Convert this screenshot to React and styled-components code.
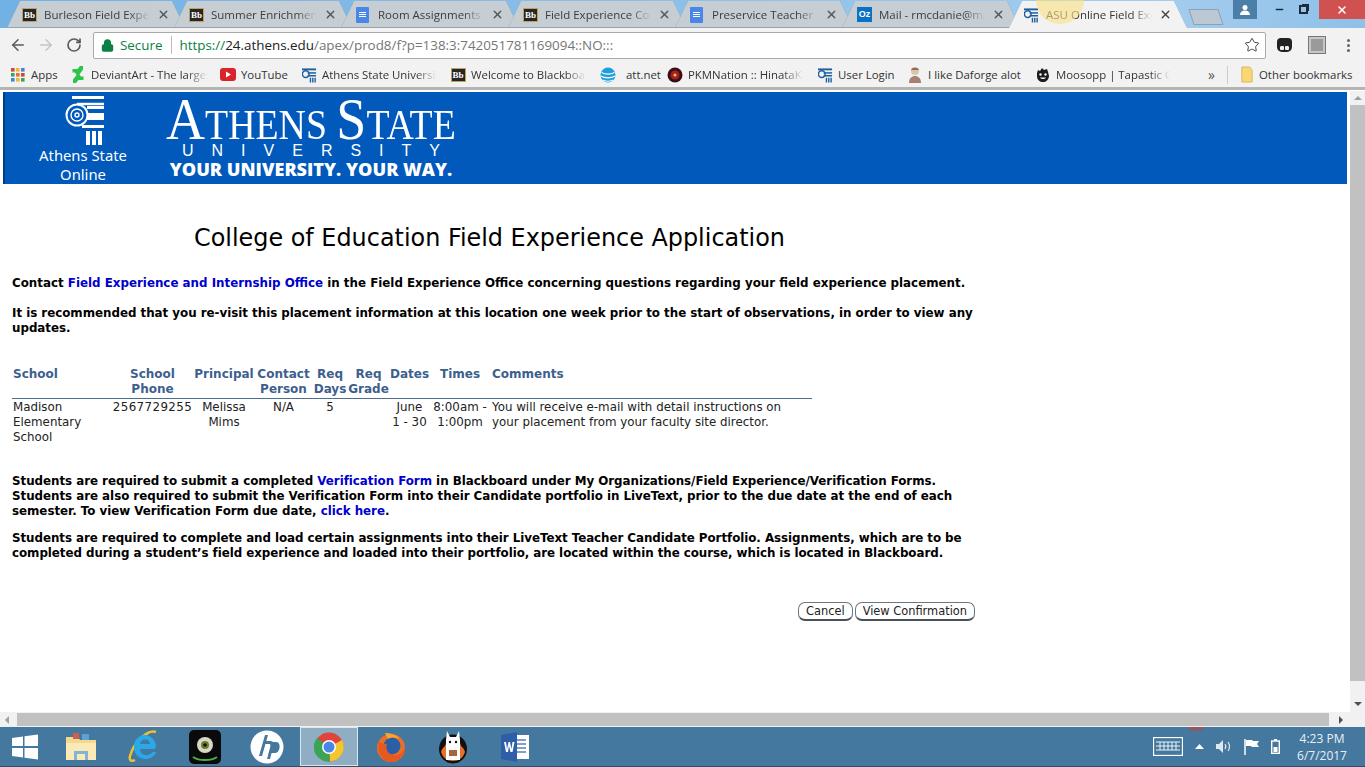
import styled, { createGlobalStyle } from "styled-components";
import { ArrowLeft, ArrowRight, RotateCw, Star, Lock, X, Minus } from "lucide-react";

const Global = createGlobalStyle`
  html, body { margin: 0; padding: 0; overflow: hidden; background: #fff; }
  * { box-sizing: border-box; }
`;

const Screen = styled.div`
  width: 1365px;
  height: 767px;
  display: flex;
  flex-direction: column;
  overflow: hidden;
  font-family: "Open Sans", "Noto Sans", sans-serif;
`;

/* ---------- tab strip ---------- */
const Strip = styled.div`
  height: 28px;
  flex: none;
  display: flex;
  position: relative;
  padding: 1px 0 0 7px;
  background: linear-gradient(90deg, #72b1e4 0%, #8dc0e8 50%, #a4cdee 85%, #8fc0e8 100%);
`;

const TabShell = styled.div`
  width: 178px;
  height: 27px;
  flex: none;
  margin-left: ${(p) => (p.$first ? 0 : -11)}px;
  position: relative;
  z-index: ${(p) => (p.$active ? 2 : 1)};
  filter: drop-shadow(0 0 0.6px #6f8190);
`;

const Tab = styled.div`
  height: 27px;
  display: flex;
  align-items: center;
  gap: 7px;
  padding: 0 15px;
  font-size: 11.500px;
  color: ${(p) => (p.$active ? "#333" : "#3c3c3c")};
  background: ${(p) => (p.$active ? "#f2f2f2" : "linear-gradient(#c6ced4 96%, #9aa5ae 96%)")};
  clip-path: polygon(0 100%, 13px 0, calc(100% - 13px) 0, 100% 100%);
`;

const TabTitle = styled.span`
  flex: 1;
  min-width: 0;
  white-space: nowrap;
  overflow: hidden;
  -webkit-mask-image: linear-gradient(90deg, #000 80%, transparent 100%);
  mask-image: linear-gradient(90deg, #000 80%, transparent 100%);
`;

const NewTab = styled.div`
  width: 30px;
  height: 16px;
  margin: 8px 0 0 4px;
  flex: none;
  background: #bcc8d3;
  border: 1px solid #8aa2b6;
  transform: skewX(18deg);
`;

const Glow = styled.div`
  position: absolute;
  z-index: 3;
  left: 1036px;
  top: -24px;
  width: 48px;
  height: 48px;
  border-radius: 50%;
  background: radial-gradient(circle, rgba(250, 225, 130, 0.6) 72%, rgba(250, 225, 130, 0) 100%);
`;

const WinButtons = styled.div`
  position: absolute;
  right: 0;
  top: 0;
  height: 19px;
  display: flex;
  align-items: flex-start;
`;

const UserBtn = styled.div`
  width: 24px;
  height: 19px;
  margin-right: 10px;
  background: #4c7fa8;
  display: flex;
  align-items: center;
  justify-content: center;
`;

const WinBtn = styled.div`
  width: ${(p) => p.$w}px;
  height: 19px;
  display: flex;
  align-items: center;
  justify-content: center;
  padding-right: ${(p) => (p.$pad ? p.$pad : 0)}px;
  background: ${(p) => (p.$close ? "#d05250" : "transparent")};
  color: ${(p) => (p.$close ? "#fff" : "#1c2c3a")};
`;

const Restore = styled.div`
  width: 9px;
  height: 9px;
  border: 2px solid #1c2c3a;
  box-shadow: 2px -2px 0 -1px #1c2c3a;
`;

/* ---------- toolbar ---------- */
const Toolbar = styled.div`
  height: 34px;
  flex: none;
  display: flex;
  align-items: center;
  background: #f2f2f2;
  padding: 0 0 0 4px;
  color: #555;
`;

const NavBtn = styled.div`
  width: 28px;
  display: flex;
  justify-content: center;
  color: ${(p) => (p.$off ? "#c4c4c4" : "#5a5a5a")};
`;

const Omnibox = styled.div`
  width: 1173px;
  height: 27px;
  margin-left: 5px;
  display: flex;
  align-items: center;
  background: #fff;
  border: 1px solid #a9a9a9;
  border-radius: 2px;
  padding: 0 5px 0 7px;
  font-size: 13.400px;
`;

const Secure = styled.span`
  display: flex;
  align-items: center;
  gap: 6px;
  color: #0b8043;
  padding-right: 9px;
  margin-right: 7px;
  border-right: 1px solid #bbb;
  height: 18px;
`;

const Url = styled.span`
  flex: 1;
  color: #767676;
  white-space: nowrap;
  i { font-style: normal; color: #0b8043; }
  b { font-weight: 400; color: #222; }
`;

const ExtGroup = styled.div`
  display: flex;
  align-items: center;
  gap: 17px;
  margin-left: 11px;
`;

const Ghost = styled.div`
  width: 15px;
  height: 14px;
  background: #222;
  border-radius: 4px 4px 5px 5px;
  position: relative;
  &::after {
    content: "";
    position: absolute;
    left: 2px;
    bottom: 1px;
    width: 11px;
    height: 5px;
    border-radius: 3px;
    background: radial-gradient(circle at 3px 2px, #eee 2px, transparent 2.5px),
      radial-gradient(circle at 8px 2px, #eee 2px, transparent 2.5px);
  }
`;

const Shield = styled.div`
  width: 16px;
  height: 16px;
  background: #9a9a9a;
  border: 2px solid #c7c7c7;
  outline: 1px solid #777;
`;

const Dots = styled.div`
  width: 3px;
  height: 3px;
  margin-left: 5px;
  border-radius: 50%;
  background: #666;
  box-shadow: 0 -5px 0 #666, 0 5px 0 #666;
`;

/* ---------- bookmarks ---------- */
const Bookmarks = styled.div`
  height: 28px;
  flex: none;
  display: flex;
  align-items: center;
  background: #f2f2f2;
  border-bottom: 1px solid #b4b4b4;
  box-shadow: inset 0 -2px 0 #b4b4b4;
  padding: 0 0 2px 10px;
  font-size: 11.400px;
  color: #333;
`;

const Mark = styled.div`
  width: ${(p) => p.$w}px;
  flex: none;
  display: flex;
  align-items: center;
  gap: ${(p) => p.$gap}px;
  white-space: nowrap;
`;

const MarkText = styled.span`
  flex: 1;
  min-width: 0;
  overflow: hidden;
  margin-right: ${(p) => p.$trim}px;
  ${(p) =>
    p.$trim > 0 &&
    `-webkit-mask-image: linear-gradient(90deg, #000 82%, transparent 100%);
     mask-image: linear-gradient(90deg, #000 82%, transparent 100%);`}
`;

const IconBox = styled.span`
  width: 16px;
  flex: none;
  display: flex;
  align-items: center;
  justify-content: center;
`;

const TabIcon = styled(IconBox)`
  width: 15px;
  justify-content: flex-start;
`;

const Chevron = styled.span`
  width: 20px;
  flex: none;
  font-size: 14px;
  color: #555;
  border-right: 1px solid #ccc;
  height: 18px;
  line-height: 17px;
`;

const BmRight = styled.div`
  display: flex;
  align-items: center;
  gap: 4px;
  margin-left: 11px;
  white-space: nowrap;
`;

/* ---------- favicons ---------- */
const BbIcon = styled.span`
  width: 15px;
  height: 14px;
  flex: none;
  background: #262626;
  border: 1px solid #bda25e;
  color: #fff;
  font: bold 9px/12px "Liberation Serif", serif;
  text-align: center;
`;

const DocIcon = styled.span`
  width: 13px;
  height: 16px;
  flex: none;
  background: #4a86e8;
  border-radius: 1px;
  padding: 5px 3px 0;
  display: flex;
  flex-direction: column;
  gap: 1px;
  i { height: 1px; background: #fff; display: block; }
`;

const OutlookIcon = styled.span`
  width: 15px;
  height: 15px;
  flex: none;
  background: #0a72c4;
  color: #fff;
  font: bold 9px/15px "Liberation Sans", sans-serif;
  text-align: center;
`;

const Favicon = ({ kind }) => {
  if (kind === "bb") return <BbIcon>Bb</BbIcon>;
  if (kind === "doc")
    return (
      <DocIcon>
        <i />
        <i />
        <i />
      </DocIcon>
    );
  if (kind === "mail") return <OutlookIcon>Oz</OutlookIcon>;
  if (kind === "asu")
    return (
      <svg width="15" height="16" viewBox="0 0 16 16" style={{ flex: "none" }}>
        <rect x="0" y="1" width="15" height="2" fill="#1d5f9e" />
        <circle cx="4" cy="7" r="3.6" fill="none" stroke="#1d5f9e" strokeWidth="1.6" />
        <rect x="6" y="5" width="9" height="1.6" fill="#1d5f9e" />
        <rect x="6" y="8" width="9" height="1.6" fill="#1d5f9e" />
        <path d="M9 11v5M11.5 11v5M14 11v5" stroke="#1d5f9e" strokeWidth="1.5" />
      </svg>
    );
  if (kind === "apps")
    return (
      <svg width="14" height="14" viewBox="0 0 14 14" style={{ flex: "none" }}>
        {[0, 5, 10].map((y, r) =>
          [0, 5, 10].map((x, c) => (
            <rect
              key={x + "-" + y}
              x={x}
              y={y}
              width="3.6"
              height="3.6"
              fill={["#d8433b", "#f2b632", "#3f86e0", "#3aa655", "#e2713a", "#d8433b", "#3f86e0", "#f2b632", "#3aa655"][r * 3 + c]}
            />
          ))
        )}
      </svg>
    );
  if (kind === "da")
    return (
      <svg width="12" height="17" viewBox="0 0 12 17" style={{ flex: "none" }}>
        <path d="M11 0v3.5L7.5 8.5 9 10.5h2.500V14H6.500L4 17H1v-3.500L4.500 9 3 6.500H.5V3h5L8 0z" fill="#2dc44a" />
      </svg>
    );
  if (kind === "yt")
    return (
      <svg width="16" height="13" viewBox="0 0 16 13" style={{ flex: "none" }}>
        <rect width="16" height="13" rx="3" fill="#d9252a" />
        <path d="M6 3.500v6l5-3z" fill="#fff" />
      </svg>
    );
  if (kind === "att")
    return (
      <svg width="16" height="16" viewBox="0 0 16 16" style={{ flex: "none" }}>
        <circle cx="8" cy="8" r="7.500" fill="#1f9fd8" />
        <path d="M1.500 5.500c4 2 9 2 13 0M.8 9c4 2.500 10 2.500 14.400 0M3 13c3 1.500 7 1.500 10 0" stroke="#fff" strokeWidth="1.1" fill="none" />
      </svg>
    );
  if (kind === "pkm")
    return (
      <svg width="16" height="16" viewBox="0 0 16 16" style={{ flex: "none" }}>
        <circle cx="8" cy="8" r="7.500" fill="#3c0f14" />
        <circle cx="8" cy="8" r="4.500" fill="#a51f22" />
        <circle cx="8" cy="8" r="1.600" fill="#e5c34a" />
      </svg>
    );
  if (kind === "face")
    return (
      <svg width="14" height="17" viewBox="0 0 14 17" style={{ flex: "none" }}>
        <circle cx="7" cy="5" r="4" fill="#d9c4b0" />
        <path d="M1 17c0-5 3-7 6-7s6 2 6 7z" fill="#a77f73" />
        <path d="M3 4c1-3 7-3 8 0z" fill="#8a6d5b" />
      </svg>
    );
  if (kind === "moo")
    return (
      <svg width="16" height="16" viewBox="0 0 16 16" style={{ flex: "none" }}>
        <path d="M2 6l1-3 2 1 2-3 2 2 3-1 1 3 1 4c-.5 4-3 6-6 6s-6-2-6-6z" fill="#1c1c1c" />
        <circle cx="5.500" cy="7.500" r="1.200" fill="#fff" />
        <circle cx="10.500" cy="7.500" r="1.200" fill="#fff" />
        <path d="M5 10.500c1.500 2 4.500 2 6 0z" fill="#fff" />
      </svg>
    );
  return (
    <svg width="12" height="17" viewBox="0 0 14 17" preserveAspectRatio="none" style={{ flex: "none" }}>
      <path d="M1 1h9l3 3v12H1z" fill="#fbd774" stroke="#d9b659" />
    </svg>
  );
};

/* ---------- page ---------- */
const Viewport = styled.div`
  flex: 1;
  min-height: 0;
  display: flex;
  background: #fff;
`;

const PageCol = styled.div`
  flex: 1;
  min-width: 0;
  padding-top: 2px;
`;

const Banner = styled.div`
  height: 92px;
  margin: 0 3px;
  display: flex;
  color: #fff;
  border-left: 2px solid #003f87;
  background: #0059bb;
`;

const LogoCol = styled.div`
  width: 156px;
  flex: none;
  display: flex;
  flex-direction: column;
  align-items: center;
  padding-top: 4px;
  font: 14.800px/19px "Noto Sans", "Open Sans", sans-serif;
  text-align: center;
`;

const Wordmark = styled.div`
  margin-left: 4px;
  width: 292px;
  display: flex;
  flex-direction: column;
  align-items: center;
`;

const BigName = styled.div`
  font: 400 42px/40px "Liberation Serif", serif;
  white-space: nowrap;
  margin-top: 7px;
  height: 40px;
  transform: scaleX(0.9);
  span { font-size: 60px; }
`;

const Univ = styled.div`
  font: 400 16px/15px "Liberation Sans", sans-serif;
  letter-spacing: 18px;
  margin: 4px -18px 0 0;
  white-space: nowrap;
`;

const Motto = styled.div`
  font: 800 18.100px/18px "Open Sans", sans-serif;
  margin-top: 2px;
  white-space: nowrap;
`;

const Content = styled.div`
  width: 965px;
  margin-left: 12px;
  font-family: "DejaVu Sans", Verdana, sans-serif;
  color: #000;
`;

const Title = styled.h1`
  margin: 39px 0 0 182px;
  font: 400 23.900px/30px "DejaVu Sans", sans-serif;
  white-space: nowrap;
`;

const Para = styled.p`
  margin: ${(p) => p.$top}px 0 0;
  font-weight: 700;
  font-size: 11.870px;
  line-height: 15px;
  letter-spacing: ${(p) => (p.$track ? p.$track : 0)}px;
  a { color: #0000cd; text-decoration: none; }
`;

const Report = styled.table`
  width: 800px;
  margin-top: 31px;
  border-collapse: collapse;
  table-layout: fixed;
  font-size: 11.850px;
  line-height: 15px;
`;

const Th = styled.th`
  padding: 0 ${(p) => (p.$padR ? p.$padR : 0)}px 1px ${(p) => (p.$pad ? p.$pad : 0)}px;
  font-size: 12px;
  line-height: 15px;
  font-weight: 700;
  color: #3d5f8e;
  vertical-align: top;
  text-align: ${(p) => (p.$left ? "left" : "center")};
  border-bottom: 1px solid #4b6f8f;
  white-space: nowrap;
`;

const Td = styled.td`
  padding: 1px ${(p) => (p.$padR ? p.$padR : 0)}px 0 ${(p) => (p.$pad ? p.$pad : 0)}px;
  vertical-align: top;
  color: #222;
  letter-spacing: ${(p) => (p.$wide ? "0.4px" : "0")};
  text-align: ${(p) => (p.$left ? "left" : "center")};
`;

const Actions = styled.div`
  display: flex;
  justify-content: flex-end;
  gap: 2px;
  margin: 41px 2px 0 0;
`;

const Btn = styled.button`
  height: 19px;
  padding: 0 7px;
  background: #fff;
  border: 1px solid #6a7682;
  border-bottom: 2px solid #48525c;
  border-radius: 7px;
  font: 11.400px/14px "DejaVu Sans", sans-serif;
  color: #222;
`;

const VScroll = styled.div`
  width: 15px;
  flex: none;
  margin-top: 1px;
  padding-top: 5px;
  background: #f1f1f1;
  display: flex;
  flex-direction: column;
  align-items: center;
`;

const VThumb = styled.div`
  width: 15px;
  height: 576px;
  margin: 5px 0 auto;
  background: #c1c1c1;
`;

const Arrow = styled.span`
  width: 0;
  height: 0;
  border: 4px solid transparent;
  ${(p) => (p.$dir === "up" ? "border-bottom-color: #a0a0a0; border-top-width: 0;" : "")}
  ${(p) => (p.$dir === "down" ? "border-top-color: #505050; border-bottom-width: 0; margin-bottom: 6px;" : "")}
  ${(p) => (p.$dir === "left" ? "border-right-color: #a0a0a0; border-left-width: 0;" : "")}
  ${(p) => (p.$dir === "right" ? "border-left-color: #505050; border-right-width: 0;" : "")}
`;

const HScroll = styled.div`
  height: 15px;
  flex: none;
  display: flex;
  align-items: center;
  background: #f1f1f1;
  padding: 0 22px 0 5px;
  gap: 8px;
`;

const HThumb = styled.div`
  flex: 1;
  height: 13px;
  background: #c1c1c1;
  margin-right: 2px;
`;

/* ---------- taskbar ---------- */
const Taskbar = styled.div`
  height: 40px;
  flex: none;
  position: relative;
  display: flex;
  align-items: center;
  background: #44789f;
  border-bottom: 1px solid #2c4f6b;
  color: #fff;
`;

const Pinned = styled.div`
  display: flex;
`;

const Slot = styled.div`
  width: ${(p) => (p.$active ? 58 : p.$start ? 50 : 62)}px;
  height: 39px;
  flex: none;
  margin: 0 ${(p) => (p.$active ? 2 : 0)}px;
  display: flex;
  align-items: center;
  justify-content: center;
  ${(p) => p.$active && "background: #8fadc3; border: 1px solid #dbe6ee;"}
`;

const Tray = styled.div`
  margin-left: auto;
  display: flex;
  align-items: center;
  gap: 12px;
  padding-right: 17px;
`;

const Clock = styled.div`
  width: 52px;
  margin-left: 4px;
  font: 12px/17px "Open Sans", sans-serif;
  text-align: center;
  color: #e9f0f5;
  white-space: nowrap;
`;

const Peek = styled.div`
  position: absolute;
  left: 1188px;
  top: 0;
  width: 16px;
  height: 4px;
  border-radius: 0 0 8px 8px;
  background: #8a5a66;
`;

const tabs = [
  ["bb", "Burleson Field Experience"],
  ["bb", "Summer Enrichment Program"],
  ["doc", "Room Assignments - Google"],
  ["bb", "Field Experience Course"],
  ["doc", "Preservice Teacher Observ"],
  ["mail", "Mail - rmcdanie@mail.athens"],
  ["asu", "ASU Online Field Experience"],
];

// kind, title, slot width, space kept free after the faded title, icon gap
const marks = [
  ["apps", "Apps", 60, 0, 5],
  ["da", "DeviantArt - The largest", 150, 12, 5],
  ["yt", "YouTube", 81, 0, 5],
  ["asu", "Athens State University", 149, 13, 5],
  ["bb", "Welcome to Blackboard", 150, 14, 5],
  ["att", "att.net", 67, 0, 10],
  ["pkm", "PKMNation :: HinataKi", 150, 14, 5],
  ["asu", "User Login", 90, 0, 5],
  ["face", "I like Daforge alot", 128, 0, 5],
  ["moo", "Moosopp | Tapastic Comics", 173, 38, 5],
];

const cols = [100, 81, 62, 57, 36, 41, 41, 62, 320];

const Column = () => (
  <svg width="42" height="50" viewBox="0 0 42 50">
    <g fill="#fff">
      <rect x="10" y="0" width="32" height="3" />
      <rect x="25" y="10" width="17" height="3" />
      <rect x="25" y="17" width="17" height="7" />
      <rect x="20" y="29" width="22" height="3" />
      <rect x="24" y="35" width="4" height="14" />
      <rect x="30" y="35" width="4" height="14" />
      <rect x="36" y="35" width="4" height="14" />
    </g>
    <g fill="none" stroke="#fff">
      <circle cx="15" cy="19" r="10.500" strokeWidth="2" />
      <circle cx="15" cy="19" r="6" strokeWidth="1.400" />
      <circle cx="15" cy="19" r="2" strokeWidth="1.400" />
      <path d="M15 8h27" strokeWidth="2.500" />
    </g>
  </svg>
);

export default function App() {
  return (
    <>
      <Global />
      <Screen>
        <Strip>
          {tabs.map(([kind, title], i) => (
            <TabShell key={title} $first={i === 0} $active={i === 6}>
              <Tab $active={i === 6}>
                <TabIcon>
                  <Favicon kind={kind} />
                </TabIcon>
                <TabTitle>{title}</TabTitle>
                <X size={13} strokeWidth={2.500} color={i === 6 ? "#444" : "#555"} />
              </Tab>
            </TabShell>
          ))}
          <NewTab />
          <Glow />
          <WinButtons>
            <UserBtn>
              <svg width="12" height="12" viewBox="0 0 12 12">
                <circle cx="6" cy="3.500" r="2.500" fill="#fff" />
                <path d="M1 11c0-3 2-4.500 5-4.500s5 1.500 5 4.500z" fill="#fff" />
              </svg>
            </UserBtn>
            <WinBtn $w={24}>
              <Minus size={11} strokeWidth={3} />
            </WinBtn>
            <WinBtn $w={28} $pad={4}>
              <Restore />
            </WinBtn>
            <WinBtn $close $w={46}>
              <X size={12} strokeWidth={3} />
            </WinBtn>
          </WinButtons>
        </Strip>

        <Toolbar>
          <NavBtn>
            <ArrowLeft size={18} strokeWidth={2} />
          </NavBtn>
          <NavBtn $off>
            <ArrowRight size={18} strokeWidth={2} />
          </NavBtn>
          <NavBtn>
            <RotateCw size={16} strokeWidth={2.500} />
          </NavBtn>
          <Omnibox>
            <Secure>
              <Lock size={13} strokeWidth={3} fill="#0b8043" />
              Secure
            </Secure>
            <Url>
              <i>https://</i>
              <b>24.athens.edu</b>/apex/prod8/f?p=138:3:742051781169094::NO:::
            </Url>
            <Star size={16} strokeWidth={1.500} color="#444" />
          </Omnibox>
          <ExtGroup>
            <Ghost />
            <Shield />
            <Dots />
          </ExtGroup>
        </Toolbar>

        <Bookmarks>
          {marks.map(([kind, title, w, trim, gap]) => (
            <Mark key={title} $w={w} $gap={gap}>
              <IconBox>
                <Favicon kind={kind} />
              </IconBox>
              <MarkText $trim={trim}>{title}</MarkText>
            </Mark>
          ))}
          <Chevron>»</Chevron>
          <BmRight>
            <IconBox>
              <Favicon kind="folder" />
            </IconBox>
            Other bookmarks
          </BmRight>
        </Bookmarks>

        <Viewport>
          <PageCol>
            <Banner>
              <LogoCol>
                <Column />
                <span>Athens State</span>
                <span>Online</span>
              </LogoCol>
              <Wordmark>
                <BigName>
                  <span>A</span>THENS <span>S</span>TATE
                </BigName>
                <Univ>UNIVERSITY</Univ>
                <Motto>YOUR UNIVERSITY. YOUR WAY.</Motto>
              </Wordmark>
            </Banner>

            <Content>
              <Title>College of Education Field Experience Application</Title>
              <Para $top={23}>
                Contact <a>Field Experience and Internship Office</a> in the Field Experience Office concerning
                questions regarding your field experience placement.
              </Para>
              <Para $top={15} $track={-0.02}>
                It is recommended that you re-visit this placement information at this location one week prior to the
                start of observations, in order to view any updates.
              </Para>

              <Report>
                <colgroup>
                  {cols.map((w, i) => (
                    <col key={i} width={w} />
                  ))}
                </colgroup>
                <thead>
                  <tr>
                    <Th $left $pad={1}>School</Th>
                    <Th>
                      School
                      <br />
                      Phone
                    </Th>
                    <Th>Principal</Th>
                    <Th>
                      Contact
                      <br />
                      Person
                    </Th>
                    <Th>
                      Req
                      <br />
                      Days
                    </Th>
                    <Th>
                      Req
                      <br />
                      Grade
                    </Th>
                    <Th>Dates</Th>
                    <Th $padR={2}>Times</Th>
                    <Th $left>Comments</Th>
                  </tr>
                </thead>
                <tbody>
                  <tr>
                    <Td $left $pad={1}>
                      Madison
                      <br />
                      Elementary
                      <br />
                      School
                    </Td>
                    <Td $wide>2567729255</Td>
                    <Td>
                      Melissa
                      <br />
                      Mims
                    </Td>
                    <Td>N/A</Td>
                    <Td>5</Td>
                    <Td />
                    <Td>
                      June
                      <br />1 - 30
                    </Td>
                    <Td $padR={2}>
                      8:00am -
                      <br />
                      1:00pm
                    </Td>
                    <Td $left $padR={20}>
                      You will receive e-mail with detail instructions on your placement from your faculty site director.
                    </Td>
                  </tr>
                </tbody>
              </Report>

              <Para $top={29} $track={-0.03}>
                Students are required to submit a completed <a>Verification Form</a> in Blackboard under My
                Organizations/Field Experience/Verification Forms. Students are also required to submit the Verification
                Form into their Candidate portfolio in LiveText, prior to the due date at the end of each semester. To
                view Verification Form due date, <a>click here</a>.
              </Para>
              <Para $top={12} $track={-0.05}>
                Students are required to complete and load certain assignments into their LiveText Teacher Candidate
                Portfolio. Assignments, which are to be completed during a student’s field experience and loaded into
                their portfolio, are located within the course, which is located in Blackboard.
              </Para>

              <Actions>
                <Btn>Cancel</Btn>
                <Btn>View Confirmation</Btn>
              </Actions>
            </Content>
          </PageCol>
          <VScroll>
            <Arrow $dir="up" />
            <VThumb />
            <Arrow $dir="down" />
          </VScroll>
        </Viewport>

        <HScroll>
          <Arrow $dir="left" />
          <HThumb />
          <Arrow $dir="right" />
        </HScroll>

        <Taskbar>
          <Peek />
          <Pinned>
            <Slot $start>
              <svg width="28" height="28" viewBox="0 0 28 28">
                <path d="M1 5l11-1.500V13H1zM13.500 3.300L27 1.500V13H13.500zM1 15h11v9.500L1 23zM13.500 15H27v11.500L13.500 24.700z" fill="#fff" />
              </svg>
            </Slot>
            <Slot>
              <svg width="32" height="32" viewBox="0 0 32 32">
                <path d="M1 6h12l2 3h16v20H1z" fill="#f3d98a" />
                <path d="M1 12h30v17H1z" fill="#fbeab8" />
                <rect x="8" y="2" width="6" height="6" fill="#d85a4a" />
                <rect x="17" y="3" width="7" height="6" fill="#5aa2d8" />
                <path d="M9 20h14v9h-3v-6h-8v6H9z" fill="#7fb6d8" />
              </svg>
            </Slot>
            <Slot>
              <svg width="30" height="34" viewBox="0 0 30 34">
                <path d="M28 2C20-1 6 12 2 26c-1 4 1 6 5 4" fill="none" stroke="#eec22f" strokeWidth="2.500" />
                <path d="M27 19H12c0 7 9 8 13 3h3c-4 11-22 9-22-5S24 0 28 15zM12 14h10c0-6-9-6-10 0z" fill="#29a9e8" />
              </svg>
            </Slot>
            <Slot>
              <svg width="32" height="34" viewBox="0 0 32 34">
                <rect width="32" height="34" rx="5" fill="#0a0a0a" />
                <circle cx="16" cy="15" r="8" fill="#d8d8c8" />
                <circle cx="16" cy="15" r="4" fill="#6b7d2a" />
                <circle cx="16" cy="15" r="1.800" fill="#111" />
                <path d="M4 27c6 4 18 4 24 0" stroke="#4ab04a" strokeWidth="2" fill="none" />
              </svg>
            </Slot>
            <Slot>
              <svg width="34" height="34" viewBox="0 0 34 34">
                <circle cx="17" cy="17" r="16.500" fill="#fff" />
                <path d="M15 5l-6 21h3l6-21zM14 14h5c2 0 1.500 2 1 4l-2 7h3l2.500-8c1-4-.5-6-3.500-6h-5zM22 12l-5 17h3l1.500-6h3c3 0 4.500-2 5-5s-.5-6-3.500-6z" fill="#44789f" />
              </svg>
            </Slot>
            <Slot $active>
              <svg width="30" height="30" viewBox="0 0 30 30">
                <circle cx="15" cy="15" r="14.500" fill="#e0443a" />
                <path d="M15 15L28 8a14.500 14.500 0 0 1-12 21.500z" fill="#f4c52e" />
                <path d="M15 15l1 14.500A14.500 14.500 0 0 1 3 6z" fill="#3aa655" />
                <circle cx="15" cy="15" r="7" fill="#fff" />
                <circle cx="15" cy="15" r="5.500" fill="#4a86e8" />
              </svg>
            </Slot>
            <Slot>
              <svg width="30" height="32" viewBox="0 0 30 32">
                <circle cx="15" cy="17" r="14" fill="#e8702a" />
                <circle cx="16" cy="15" r="8.500" fill="#2a5fa8" />
                <path d="M3 10c-3 10 3 21 12 21s15-7 14-15c-2 6-7 9-12 8-5-1-8-6-6-11-4 0-7-1-8-3z" fill="#e65a22" />
                <path d="M9 2c4 0 12 1 14 6-4-2-8-2-11 0z" fill="#f6a62a" />
              </svg>
            </Slot>
            <Slot>
              <svg width="30" height="34" viewBox="0 0 30 34">
                <ellipse cx="15" cy="19" rx="14" ry="14.500" fill="#111" />
                <path d="M3 22c2-6 4-4 5-9l3 5 8-1 3-4c1 5 4 4 5 9-2 6-6 9-12 9S5 28 3 22z" fill="#e8702a" />
                <path d="M9 1l3 6h6l3-6 1 9v20H8V10z" fill="#fff" />
                <circle cx="12" cy="12" r="1.200" fill="#111" />
                <circle cx="18" cy="12" r="1.200" fill="#111" />
                <rect x="11" y="20" width="8" height="6" fill="#a5643a" />
              </svg>
            </Slot>
            <Slot>
              <svg width="30" height="32" viewBox="0 0 30 32">
                <rect x="11" y="4" width="18" height="24" fill="#fff" />
                <path d="M14 9h12M14 13h12M14 17h12M14 21h12" stroke="#5b7fb8" strokeWidth="1.500" />
                <path d="M1 4L17 1v30L1 28z" fill="#2f5ea8" />
                <path d="M4 11h2l1 7 1.500-7h1.500l1.500 7 1-7h2l-2 10h-2L9 15l-1 6H6z" fill="#fff" />
              </svg>
            </Slot>
          </Pinned>
          <Tray>
            <svg width="30" height="19" viewBox="0 0 30 19" fill="none" stroke="#fff">
              <rect x=".5" y=".5" width="29" height="18" strokeWidth="1.300" />
              <path d="M3 5h24M3 9h24M3 13h24M7 5v8M11 5v8M15 5v8M19 5v8M23 5v8" strokeWidth=".9" />
            </svg>
            <svg width="9" height="5" viewBox="0 0 9 5">
              <path d="M0 5l4.500-5L9 5z" fill="#fff" />
            </svg>
            <svg width="16" height="13" viewBox="0 0 16 13" fill="none">
              <path d="M0 4h3l4-4v13L3 9H0z" fill="#dfe8ef" />
              <path d="M9 4c1 1.500 1 3.500 0 5M12 2c2 2.500 2 6.500 0 9" stroke="#dfe8ef" strokeWidth="1.200" />
            </svg>
            <svg width="15" height="16" viewBox="0 0 15 16">
              <path d="M1 0v16" stroke="#fff" strokeWidth="1.500" />
              <path d="M2 1h6l1 1h6l-2 3 2 3H8L7 7H2z" fill="#fff" />
            </svg>
            <svg width="9" height="15" viewBox="0 0 9 15" fill="none">
              <rect x=".7" y="2" width="7.600" height="12.300" stroke="#fff" strokeWidth="1.400" />
              <rect x="3" y="0" width="3" height="2" fill="#fff" />
              <rect x="2.500" y="8" width="4" height="5" fill="#fff" />
            </svg>
            <Clock>
              4:23 PM
              <br />
              6/7/2017
            </Clock>
          </Tray>
        </Taskbar>
      </Screen>
    </>
  );
}
